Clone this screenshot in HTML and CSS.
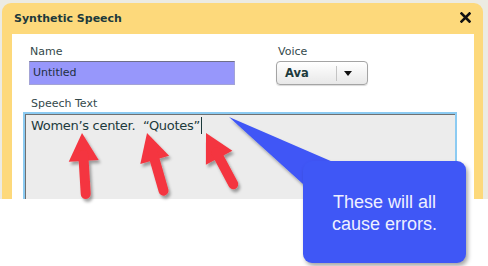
FILE: index.html
```html
<!DOCTYPE html>
<html lang="en">
<head>
    <meta charset="UTF-8">
    <title>Synthetic Speech</title>
    <link rel="stylesheet" href="styles.css">
</head>
<body>
    <div class="screen">
        <div class="dialog">
            <div class="titlebar">
                <span class="title">Synthetic Speech</span>
                <svg class="close" width="11" height="11" viewBox="0 0 11 11">
                    <path d="M1.5 1.5 L9.5 9.5 M9.5 1.5 L1.5 9.5" stroke="#111" stroke-width="2.6" stroke-linecap="square"/>
                </svg>
            </div>
            <div class="panel">
                <div class="fields">
                    <div class="field name-field">
                        <label>Name</label>
                        <div class="name-input">Untitled</div>
                    </div>
                    <div class="field voice-field">
                        <label>Voice</label>
                        <div class="select">
                            <span class="select-value">Ava</span>
                            <span class="select-divider"></span>
                            <span class="select-arrow"></span>
                        </div>
                    </div>
                </div>
                <label class="speech-label">Speech Text</label>
                <div class="speech-box">Women’s center.&nbsp; “Quotes”<span class="caret"></span></div>
            </div>
        </div>
    </div>

    <!-- annotation layer -->
    <svg class="overlay" width="488" height="266" viewBox="0 0 488 266">
        <defs>
            <filter id="shadow" x="-20%" y="-20%" width="150%" height="150%">
                <feDropShadow dx="2" dy="3" stdDeviation="1.6" flood-color="#000" flood-opacity="0.35"/>
            </filter>
        </defs>
        <polygon points="229,117 333,162 303,184" fill="#3f57f6" filter="url(#shadow)"/>
        <g fill="#f4363f" stroke="#f4363f" filter="url(#shadow)">
            <g transform="translate(82 133) rotate(-3.5)">
                <polygon points="0,0 15,28 -15,28" stroke="none"/>
                <line x1="0" y1="22" x2="0" y2="61" stroke-width="10" stroke-linecap="round"/>
            </g>
            <g transform="translate(147 133) rotate(-16)">
                <polygon points="0,0 15,28 -15,28" stroke="none"/>
                <line x1="0" y1="22" x2="0" y2="60" stroke-width="10" stroke-linecap="round"/>
            </g>
            <g transform="translate(206 133) rotate(-28)">
                <polygon points="0,0 15,28 -15,28" stroke="none"/>
                <line x1="0" y1="22" x2="0" y2="58" stroke-width="10" stroke-linecap="round"/>
            </g>
        </g>
    </svg>
    <div class="callout">These will all<br>cause errors.</div>
</body>
</html>
```

FILE: styles.css
```css
body {
    margin: 0;
    background-color: #fff;
    font-family: 'DejaVu Sans', Verdana, sans-serif;
}
.screen {
    height: 199px;
    padding: 3px 5px 0 2px;
    box-sizing: border-box;
    background-color: #ecebe2;
    overflow: hidden;
}
.dialog {
    height: 100%;
    display: flex;
    flex-direction: column;
    background-color: #fdd97b;
    border-radius: 9px 9px 0 0;
    padding: 0 9px 0 10px;
}
.titlebar {
    height: 31px;
    flex: none;
    display: flex;
    align-items: center;
    justify-content: space-between;
    padding: 0 3px 0 2px;
}
.title {
    font-weight: bold;
    font-size: 11px;
    color: #1d3a3c;
    margin-top: -1px;
}
.close {
    margin-top: -2px;
}
.panel {
    flex: 1;
    background-color: #fff;
    padding: 11px 17px 0 11px;
}
label {
    display: block;
    font-size: 11px;
    line-height: 13px;
    color: #34494b;
}
.fields {
    display: flex;
    padding-left: 6px;
}
.field label {
    margin-left: 1px;
    margin-bottom: 3px;
}
.name-field {
    width: 206px;
}
.name-input {
    height: 24px;
    box-sizing: border-box;
    background-color: #9797fb;
    border: 1px solid #a3a3d6;
    border-top-color: #6f6f88;
    font-size: 11px;
    line-height: 22px;
    padding-left: 3px;
    color: #1d2f40;
}
.voice-field {
    margin-left: 41px;
}
.voice-field label {
    margin-left: 2px;
}
.select {
    margin-top: 1px;
    width: 92px;
    height: 24px;
    box-sizing: border-box;
    display: flex;
    align-items: center;
    border: 1px solid #a4a4a4;
    border-radius: 4px;
    background: linear-gradient(#ffffff, #e8e8e8);
    box-shadow: 0 1px 1px rgba(0, 0, 0, 0.15);
}
.select-value {
    width: 59px;
    padding-left: 8px;
    box-sizing: border-box;
    font-weight: bold;
    font-size: 11.5px;
    color: #1d3a3c;
}
.select-divider {
    width: 1px;
    height: 15px;
    background-color: #c4c4c4;
}
.select-arrow {
    margin-left: 7px;
    border-left: 4px solid transparent;
    border-right: 4px solid transparent;
    border-top: 5px solid #111;
}
.speech-label {
    margin: 12px 0 2px 8px;
}
.speech-box {
    height: 100px;
    border: 2px solid #8ccbf2;
    box-shadow: inset 1px 1px 0 #707070;
    background-color: #ececec;
    padding: 3px 6px;
    font-size: 13px;
    letter-spacing: -0.3px;
    line-height: 17px;
    color: #1c3a3c;
    white-space: pre;
}
.caret {
    display: inline-block;
    width: 1px;
    height: 17px;
    margin-left: 1px;
    vertical-align: -4px;
    background-color: #1c3a3c;
}
.overlay {
    position: absolute;
    left: 0;
    top: 0;
    pointer-events: none;
}
.callout {
    position: absolute;
    left: 303px;
    top: 161px;
    width: 163px;
    height: 102px;
    box-sizing: border-box;
    padding-top: 30px;
    border-radius: 9px;
    background-color: #3f57f6;
    box-shadow: 2px 3px 4px rgba(0, 0, 0, 0.35);
    color: #eef0ff;
    font-family: 'Liberation Sans', Arial, sans-serif;
    font-size: 18px;
    line-height: 22px;
    text-align: center;
}
```
